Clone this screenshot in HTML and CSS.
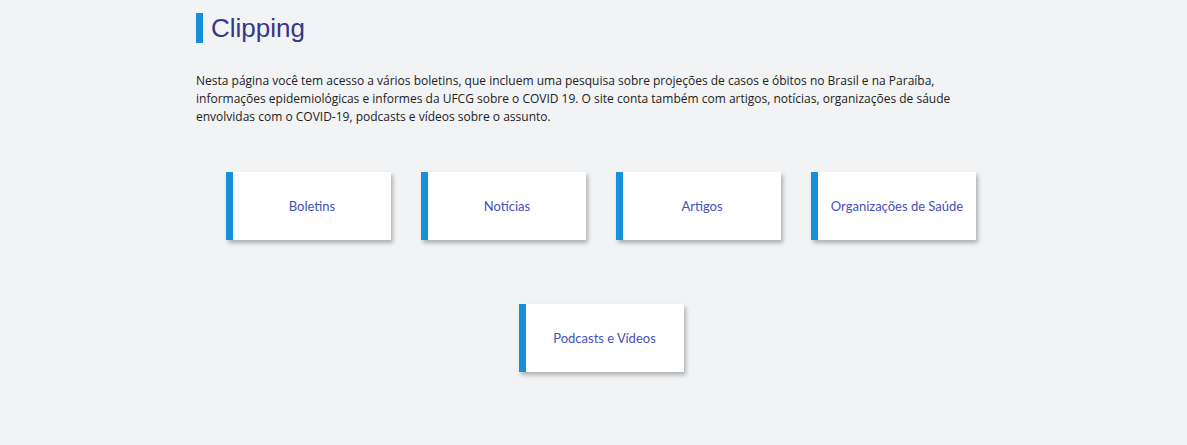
FILE: index.html
```html
<!DOCTYPE html>
<html lang="pt-BR">
<head>
<meta charset="utf-8">
<title>Clipping</title>
<link rel="stylesheet" href="styles.css">
</head>
<body>
<main class="page">
  <h1 class="title">Clipping</h1>
  <p class="intro">Nesta página você tem acesso a vários boletins, que incluem uma pesquisa sobre projeções de casos e óbitos no Brasil e na Paraíba, informações epidemiológicas e informes da UFCG sobre o COVID 19. O site conta também com artigos, notícias, organizações de sáude envolvidas com o COVID-19, podcasts e vídeos sobre o assunto.</p>
  <div class="cards">
    <a class="card" href="#">Boletins</a>
    <a class="card" href="#">Notícias</a>
    <a class="card" href="#">Artigos</a>
    <a class="card" href="#">Organizações de Saúde</a>
    <a class="card" href="#">Podcasts e Vídeos</a>
  </div>
</main>
</body>
</html>
```
FILE: styles.css
```css
html, body {
  margin: 0;
  padding: 0;
  background: #f2f3f5;
}
.page {
  width: 810px;
  margin-left: 196px;
  padding-top: 13px;
  padding-bottom: 20px;
}
.title {
  margin: 0;
  border-left: 7px solid #1690d8;
  padding-left: 8px;
  height: 30px;
  line-height: 30px;
  font-family: "Liberation Sans", Arial, sans-serif;
  font-weight: normal;
  font-size: 26px;
  color: #35378a;
}
.intro {
  margin: 29px 0 0;
  width: 770px;
  font-family: "Open Sans", sans-serif;
  font-size: 12px;
  line-height: 18px;
  color: #222;
}
.cards {
  display: flex;
  flex-wrap: wrap;
  justify-content: center;
  column-gap: 30px;
  row-gap: 64px;
  margin-top: 46px;
  padding-bottom: 10px;
}
.card {
  box-sizing: border-box;
  width: 165px;
  height: 68px;
  display: flex;
  align-items: center;
  justify-content: center;
  background: #fff;
  border-left: 7px solid #1690d8;
  box-shadow: 2px 3px 4px rgba(0,0,0,0.28);
  font-family: Lato, sans-serif;
  font-size: 13px;
  color: #4450bd;
  text-decoration: none;
}
```
